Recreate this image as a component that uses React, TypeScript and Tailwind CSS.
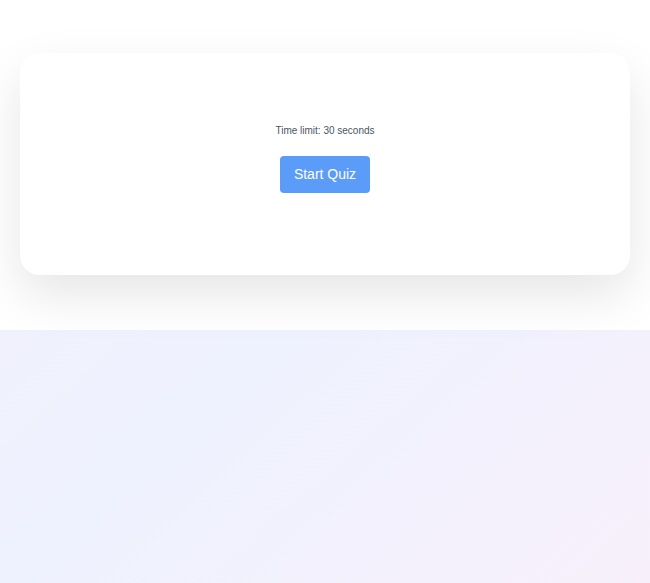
import React from 'react';

const App: React.FC = () => {
    return (
        <div className="min-h-screen bg-gradient-to-br from-[#f4f0fd] via-[#eef2fe] to-[#f7f0fb] font-['Liberation_Sans',Arial,sans-serif]">
            <div className="bg-white px-5 pt-[53px] pb-[55px]">
                <div className="bg-white rounded-[20px] shadow-[0_20px_50px_rgba(0,0,0,0.1)] h-[222px] flex flex-col items-center justify-center pb-[12px]">
                    <p className="text-[10px] text-gray-600 mb-[18px]">Time limit: 30 seconds</p>
                    <button className="bg-[#5a9cf8] text-white text-[14px] w-[90px] h-[37px] rounded-[4px]">
                        Start Quiz
                    </button>
                </div>
            </div>
        </div>
    );
};

export default App;
